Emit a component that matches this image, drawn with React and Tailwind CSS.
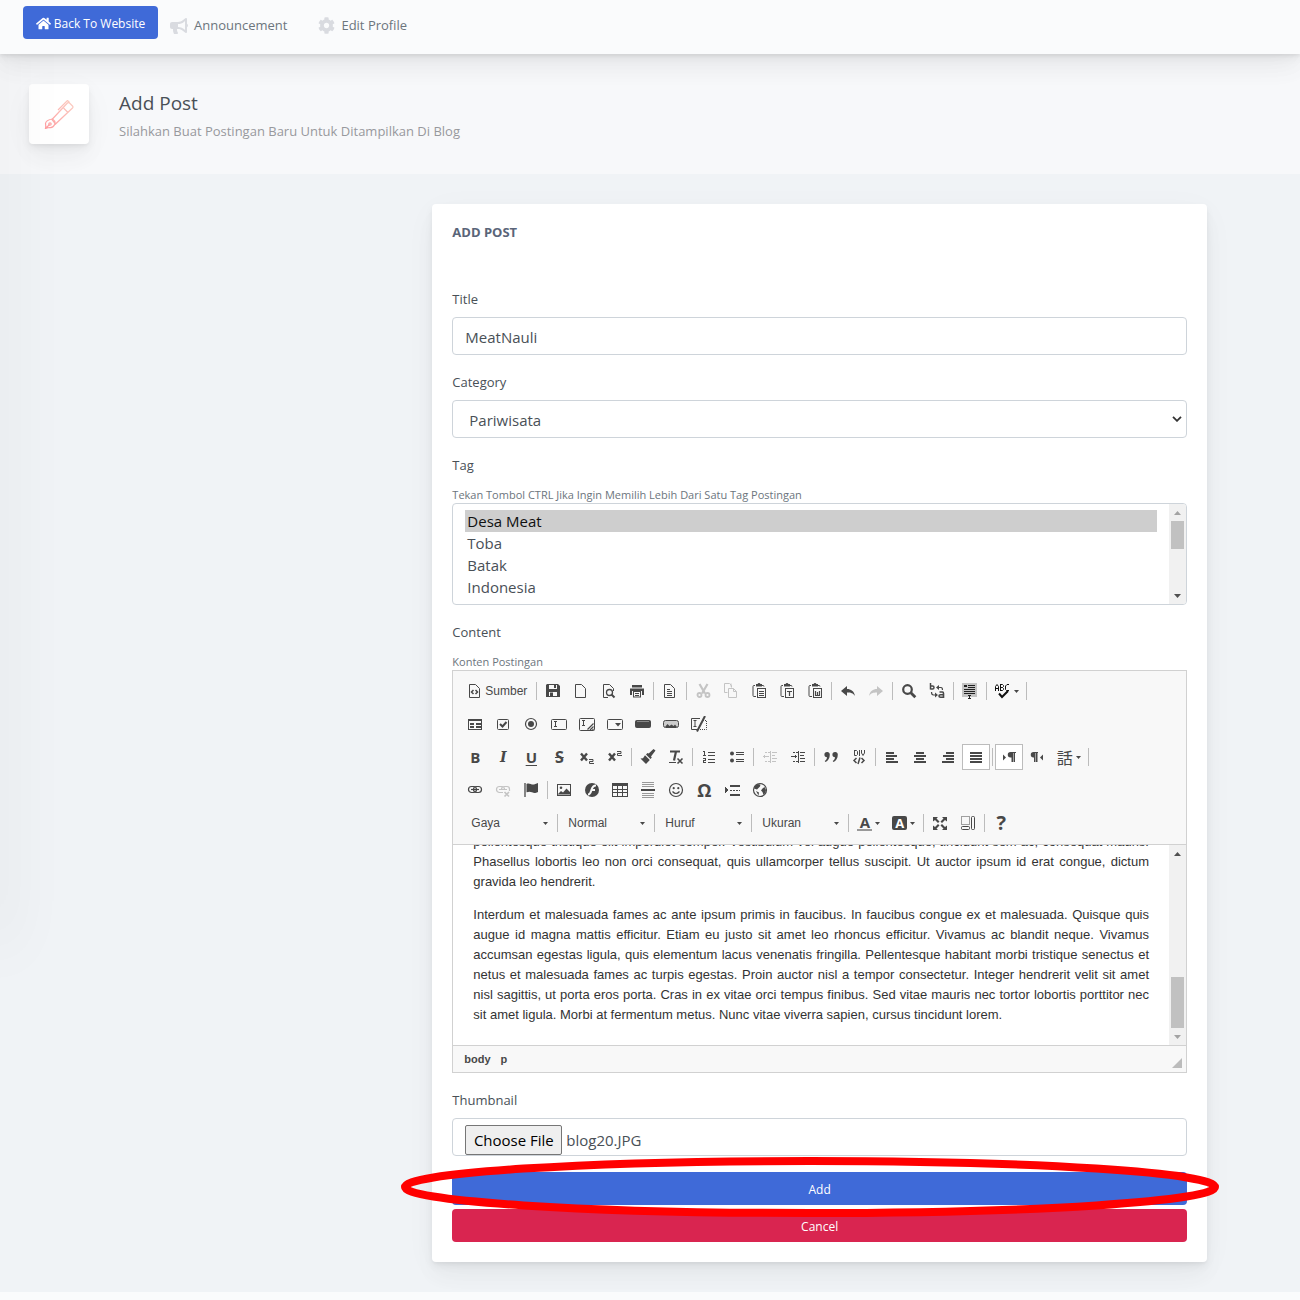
import React, { useRef } from "react";
import { FaHome, FaBullhorn, FaCog } from "react-icons/fa";

const Svg = ({ children, crisp }) => (
  <svg
    width="16"
    height="16"
    viewBox="0 0 16 16"
    fill="none"
    stroke="currentColor"
    strokeWidth="1"
    shapeRendering={crisp ? "crispEdges" : "auto"}
    aria-hidden="true"
    className="shrink-0"
  >
    {children}
  </svg>
);

const Fill = ({ d, ...rest }) => <path d={d} fill="currentColor" stroke="none" {...rest} />;

const Clipboard = ({ children }) => (
  <Svg>
    <path d="M4 2.500H3q-1 0-1 1v9q0 1 1 1h2M11 2.500h1q1 0 1 1" />
    <Fill d="M5 1h1.500l1-1h1l1 1H11v2.500H5z" />
    <rect x="6.500" y="5.500" width="8" height="9" fill="#f8f8f8" />
    {children}
  </Svg>
);

const Page = () => <path d="M3.500 1.500h6l4 4v9h-10z" />;

const icons = {
  source: (
    <Svg>
      <Page />
      <path d="M7.500 7L5.500 9l2 2M9.500 7l2 2-2 2" strokeWidth="1.500" />
    </Svg>
  ),
  save: (
    <Svg>
      <Fill d="M2 1h11l2 2v11H1V2zM4 2v4h8V2zM4 9v4h8V9z" fillRule="evenodd" />
      <Fill d="M9 2h2v3H9zM5 9.500h3V14H5z" />
    </Svg>
  ),
  newPage: (
    <Svg>
      <path d="M2.500 1.500h6l4 4v9h-10z" />
    </Svg>
  ),
  preview: (
    <Svg>
      <path d="M7 14.500H2.500v-13h6l4 4V8" />
      <circle cx="8.500" cy="9.500" r="3" strokeWidth="1.300" />
      <path d="M10.500 11.500l3 3" strokeWidth="2" />
    </Svg>
  ),
  print: (
    <Svg>
      <Fill d="M3 2h10v2.500H3zM1 5.500h14V12h-2V8H3v4H1z" />
      <rect x="4.500" y="8.500" width="7" height="5.500" />
      <path d="M6 10.500h4M6 12.500h4" />
    </Svg>
  ),
  templates: (
    <Svg>
      <path d="M2.500 1.500h6l4 4v9h-10z" />
      <path d="M5 6.500h3M5 8.500h5M5 10.500h5M5 12.500h5" />
    </Svg>
  ),
  cut: (
    <Svg>
      <path d="M4.500 1l5.500 9.500M12.500 1L7 10.500" strokeWidth="2.200" />
      <circle cx="4.500" cy="12" r="2" strokeWidth="1.800" />
      <circle cx="12.500" cy="12" r="2" strokeWidth="1.800" />
    </Svg>
  ),
  copy: (
    <Svg>
      <path d="M4.500 9.500h-3v-9h5l2 2v2M8 .5v3" />
      <path d="M5.500 5.500h5l3 3v6h-8zM10.500 5.500v3h3" />
    </Svg>
  ),
  paste: (
    <Clipboard>
      <path d="M8 8.500h5M8 10.500h5M8 12.500h5" />
    </Clipboard>
  ),
  pasteText: (
    <Clipboard>
      <path d="M8 8.500h5M10.500 8.500v4.500" strokeWidth="1.200" />
    </Clipboard>
  ),
  pasteWord: (
    <Clipboard>
      <path d="M8.500 8v4.500h4V8M10.500 9v3.500" strokeWidth="1.200" />
    </Clipboard>
  ),
  undo: (
    <Svg>
      <Fill d="M1 8l6-5v3c4 0 7 2 8 7-2-3-4-3.500-8-3.500V13z" />
    </Svg>
  ),
  redo: (
    <Svg>
      <Fill d="M15 8L9 3v3c-4 0-7 2-8 7 2-3 4-3.500 8-3.500V13z" />
    </Svg>
  ),
  find: (
    <Svg>
      <circle cx="6.500" cy="6.500" r="4.300" strokeWidth="2.200" />
      <path d="M9.800 9.800l4.500 4.500" strokeWidth="2.800" />
    </Svg>
  ),
  replace: (
    <Svg>
      <path d="M1.500 0v6.500M1.500 6h2q1.500 0 1.500-1.500T3.500 3h-2" strokeWidth="1.500" />
      <path d="M10.500 9h3q1 0 1 1.500v4.500M14.500 14.300h-3q-1.500 0-1.500-1.200t1.500-1.300h3" strokeWidth="1.600" />
      <path d="M9 4.500h3q1.500 0 1.500 2.500M2.500 9q0 3 2 3H6" strokeWidth="1.200" />
      <Fill d="M7 4.500L10 2v5zM9 12l-3-2.500v5z" />
    </Svg>
  ),
  selectAll: (
    <Svg crisp>
      <rect x="0" y="0" width="15" height="14" fill="#c4c4c4" stroke="none" />
      <path d="M2 2.500h3M2 3.500h3M6 2.500h7M6 4.500h7M2 6.500h11M2 8.500h11M2 10.500h11M6 12.500h3M7.500 13v2M6 15.500h3" stroke="#222" />
    </Svg>
  ),
  spell: (
    <Svg>
      <g stroke="#111">
        <path d="M.5 8V3.500L2 1.500l1.500 2V8M.5 5.500h3M5.500 1v7M5.500 1.500h2l1 1v1l-1 1h-2M7.500 4.500l1 1v1l-1 1h-2M14 1.500h-2l-1.500 1.500v3.500l1 1H14" />
        <path d="M4 10.500l3 3.500 6-6" strokeWidth="2" />
      </g>
    </Svg>
  ),
  form: (
    <Svg crisp>
      <rect x="1.500" y="3.500" width="13" height="10" />
      <path d="M1 4.500h14M3 7.500h4M3 8.500h4M9 7.500h5M9 8.500h5M3 10.500h4M3 11.500h4M9 10.500h5M9 11.500h5" />
    </Svg>
  ),
  checkbox: (
    <Svg>
      <rect x="2.500" y="3.500" width="11" height="10" rx="1" />
      <path d="M5 8l2.500 2.500 4-4.500" strokeWidth="2" />
    </Svg>
  ),
  radio: (
    <Svg>
      <circle cx="8" cy="8" r="5.500" strokeWidth="1.200" />
      <circle cx="8" cy="8" r="3" fill="currentColor" stroke="none" />
    </Svg>
  ),
  textField: (
    <Svg>
      <rect x=".5" y="3.500" width="15" height="10" rx="1" />
      <path d="M3 5.500h3M4.500 5.500v5M3 10.500h3" />
    </Svg>
  ),
  textarea: (
    <Svg>
      <rect x=".5" y="2.500" width="15" height="12" rx="1" />
      <path d="M3 4.500h3M4.500 4.500v5M3 9.500h3" />
      <path d="M14.500 7.500l-6 6M14.500 10.500l-3.500 3.500M14.500 13l-1 1" strokeWidth="1.200" />
    </Svg>
  ),
  selectField: (
    <Svg>
      <rect x=".5" y="3.500" width="15" height="10" rx="1" />
      <Fill d="M8 7h6l-3 3.500z" />
    </Svg>
  ),
  button: (
    <Svg>
      <rect x=".5" y="4.500" width="15" height="7" rx="1" fill="currentColor" />
      <path d="M2 5.500h12" stroke="#888" />
    </Svg>
  ),
  imageButton: (
    <Svg>
      <rect x=".5" y="4.500" width="15" height="7" rx="2" fill="#ccc" />
      <Fill d="M2 11l2.500-3 2 2 2-1.500 2 1.500L12 8.500 14 11z" />
    </Svg>
  ),
  hidden: (
    <Svg>
      <path d="M9 2.500H.5v11H6M2.500 4.500h3M4 4.500v6M2.500 10.500h3" />
      <path d="M12 4.500h3.500v9H8" strokeDasharray="1 1" />
      <path d="M14 0L6 15.500" strokeWidth="2" />
    </Svg>
  ),
  sub: (
    <Svg>
      <path d="M2 4.500l6 7M8 4.500l-6 7" strokeWidth="2.400" />
      <path d="M10 10.500h4v2h-3.500v2H15" />
    </Svg>
  ),
  sup: (
    <Svg>
      <path d="M2 4.500l6 7M8 4.500l-6 7" strokeWidth="2.400" />
      <path d="M10 2.500h4v2h-3.500v2H15" />
    </Svg>
  ),
  copyFormat: (
    <Svg>
      <Fill d="M13.500 0l2 1.500-4.500 6 .8 1-1.300 1.500L6 5.500 7.500 4l1.200.6zM5 6.300L9.800 11 6 15 .5 9.500l2.500-.3z" />
    </Svg>
  ),
  removeFormat: (
    <Svg>
      <path d="M2 2.500h10M8 2.500L6 11.500" strokeWidth="2.200" />
      <path d="M1 13.500h7" />
      <path d="M9.500 9.500l5 5M14.500 9.500l-5 5" strokeWidth="1.600" />
    </Svg>
  ),
  numbered: (
    <Svg crisp>
      <path d="M2 2.500h1.500V7M2 6.500h3M2 9.500h2.500v2h-2v2H5M7 3.500h7M7 6.500h7M7 10.500h7M7 13.500h7" />
    </Svg>
  ),
  bulleted: (
    <Svg>
      <circle cx="3" cy="4.500" r="2" fill="currentColor" stroke="none" />
      <circle cx="3" cy="11.500" r="2" fill="currentColor" stroke="none" />
      <path d="M7 3.500h8M7 5.500h8M7 10.500h8M7 12.500h8" />
    </Svg>
  ),
  outdent: (
    <Svg crisp>
      <path d="M8.500 2v12M10 3.500h5M10 6.500h3M10 9.500h5M10 12.500h4M1 7.500h6M2.500 6v3" />
      <path d="M3 3.500h5M3 12.500h5" strokeDasharray="2 1" />
    </Svg>
  ),
  indent: (
    <Svg crisp>
      <path d="M8.500 2v12M10 3.500h5M10 6.500h4M10 9.500h5M10 12.500h5M1 7.500h6M5.500 6v3" />
      <path d="M3 3.500h5M3 12.500h5" strokeDasharray="2 1" />
    </Svg>
  ),
  quote: (
    <Svg>
      <Fill d="M4 3a2.500 2.500 0 0 1 2.800 2.800C6.800 9.500 5 12 2.500 13l-.8-1C3.300 11 4 9.500 4 8.200A2.600 2.600 0 0 1 4 3zM12 3a2.500 2.500 0 0 1 2.800 2.800c0 3.700-1.800 6.200-4.300 7.200l-.8-1c1.600-1 2.300-2.500 2.300-3.800A2.600 2.600 0 0 1 12 3z" />
    </Svg>
  ),
  div: (
    <Svg>
      <path d="M3.500 1v5.500h2l1-1v-3l-1-1h-2M8.500 1v6M10.500 1v3L12 6.500 13.500 4V1" />
      <path d="M5.500 9L3 11.500 5.500 14M10.500 9l2.500 2.500-2.500 2.500M9 8.500L7 15" strokeWidth="1.500" />
    </Svg>
  ),
  left: (
    <Svg crisp>
      <Fill d="M2 3h8v2H2zM2 6h11v2H2zM2 9h8v2H2zM2 12h12v2H2z" />
    </Svg>
  ),
  center: (
    <Svg crisp>
      <Fill d="M4 3h8v2H4zM2 6h12v2H2zM4 9h8v2H4zM2 12h12v2H2z" />
    </Svg>
  ),
  right: (
    <Svg crisp>
      <Fill d="M6 3h8v2H6zM3 6h11v2H3zM6 9h8v2H6zM2 12h12v2H2z" />
    </Svg>
  ),
  justify: (
    <Svg crisp>
      <Fill d="M2 3h12v2H2zM2 6h12v2H2zM2 9h12v2H2zM2 12h12v2H2z" />
    </Svg>
  ),
  ltr: (
    <Svg>
      <Fill d="M2 5.500L5 8.500 2 11.500z" />
      <Fill d="M9.500 3H15v1h-1v9h-1.500V4H12v9h-1.500V8.500H9.500A2.700 2.700 0 0 1 9.500 3z" />
    </Svg>
  ),
  rtl: (
    <Svg>
      <Fill d="M14 5.500l-3 3 3 3z" />
      <Fill d="M4.500 3H9v1H8.500v9H7V4h-.5v9H5V8.500h-.5A2.700 2.700 0 0 1 4.500 3z" />
    </Svg>
  ),
  link: (
    <Svg>
      <rect x="1.500" y="4.500" width="8" height="6" rx="3" strokeWidth="1.200" />
      <rect x="6.500" y="4.500" width="8" height="6" rx="3" strokeWidth="1.200" />
      <path d="M4 7.500h8" strokeWidth="1.200" />
    </Svg>
  ),
  unlink: (
    <Svg>
      <path d="M8 10.500H4.500a3 3 0 0 1 0-6H7q2.500 0 2.500 3M4 7.500h8M14.500 9V7.500q0-3-2.500-3H9.500q-3 0-3 3" strokeWidth="1.200" />
      <path d="M9.500 10l4.500 4.500M14 10l-4.500 4.500" strokeWidth="1.700" />
    </Svg>
  ),
  anchor: (
    <Svg>
      <path d="M2 1v14" strokeWidth="1.300" />
      <Fill d="M3.500 2c3-1.500 4.500 1 7.500.5L15 1v9c-3 1.500-4 1.200-6 .3-2-.8-3-.8-5.500 0z" />
    </Svg>
  ),
  image: (
    <Svg>
      <rect x="1.500" y="2.500" width="13" height="11" />
      <circle cx="5" cy="5.700" r="1.300" fill="currentColor" stroke="none" />
      <Fill d="M2 12l3-3 2 1.500 3.500-4L14 10v2.500H2z" />
    </Svg>
  ),
  flash: (
    <Svg>
      <circle cx="8" cy="8" r="7" fill="currentColor" stroke="none" />
      <path d="M12 3.500C8.500 3.500 8 6 7.300 8.500S5.500 12.500 4 12.500M7.500 8H11" stroke="#f8f8f8" strokeWidth="2" />
    </Svg>
  ),
  table: (
    <Svg crisp>
      <Fill d="M0 1h16v3H0z" />
      <path d="M.5 3v11.500h15V3M0 7.500h16M0 10.500h16M5.500 4v10M10.500 4v10" />
    </Svg>
  ),
  hr: (
    <Svg crisp>
      <path d="M2 .5h12M2 2.500h12M2 4.500h12M2 11.500h12M2 13.500h12M2 15.500h12" stroke="#999" />
      <Fill d="M1 7h14v2H1z" />
    </Svg>
  ),
  smiley: (
    <Svg>
      <circle cx="8" cy="8" r="6.500" strokeWidth="1.200" />
      <circle cx="5.700" cy="6.200" r="1.100" fill="currentColor" stroke="none" />
      <circle cx="10.300" cy="6.200" r="1.100" fill="currentColor" stroke="none" />
      <path d="M4.500 9.500q3.500 4 7 0" strokeWidth="1.200" />
    </Svg>
  ),
  pageBreak: (
    <Svg crisp>
      <Fill d="M1 5l4 3-4 3zM6 3h10v2H6zM6 12h10v2H6z" />
      <path d="M6 8.500h10" strokeDasharray="2 1" />
    </Svg>
  ),
  iframe: (
    <Svg>
      <circle cx="8" cy="8" r="6.500" strokeWidth="1.200" />
      <Fill d="M2.500 4.500L5.500 2l3 .5-.5 2L6.500 6 5 7.500 2 6.500zM10.500 6.500l2-1.500 1.500 3-.5 2.500-2 2.500-1-3L9 8.500zM4 9l3 1.500-.5 3z" />
    </Svg>
  ),
  maximize: (
    <Svg>
      <Fill d="M1 2h5L4.500 3.500l3 3L6 8 3 5 1 6.500zM15 2h-5l1.500 1.500-3 3L10 8l3-3 2 1.500zM1 15h5l-1.500-1.500 3-3L6 9l-3 3-2-1.500zM15 15h-5l1.500-1.500-3-3L10 9l3 3 2-1.500z" />
    </Svg>
  ),
  blocks: (
    <Svg>
      <path d="M1.500 1.500h8v8h-8z" strokeDasharray="1 1" />
      <rect x="1.500" y="11.500" width="8" height="3" rx="1" />
      <rect x="11.500" y="1.500" width="3" height="13" rx="1" />
    </Svg>
  ),
};

const Caret = () => (
  <svg width="5" height="3" viewBox="0 0 5 3" aria-hidden="true" className="shrink-0 text-[#484848]">
    <path d="M0 0h5L2.500 3z" fill="currentColor" />
  </svg>
);

function Tool({ name, label, arrow, off, on, children }) {
  return (
    <button
      type="button"
      aria-label={label}
      disabled={off}
      className={`flex h-[26px] items-center justify-center gap-[3px] ${arrow ? "w-[35px]" : "w-7"} ${
        on ? "border border-[#bcbcbc] bg-white" : ""
      } ${off ? "text-[#c4c4c4]" : "text-[#484848]"}`}
    >
      {children || icons[name]}
      {arrow && <Caret />}
    </button>
  );
}

const Sep = () => <span className="mx-[2px] h-[18px] w-px shrink-0 bg-[#bcbcbc]" />;
const Row = ({ children }) => <div className="flex items-center">{children}</div>;
const Glyph = ({ children, className = "text-[15px]" }) => (
  <span className={`font-['Open_Sans',sans-serif] leading-4 font-bold ${className}`}>{children}</span>
);

function Combo({ text }) {
  return (
    <button
      type="button"
      aria-haspopup="listbox"
      className="flex h-[26px] w-[92px] items-center justify-between pr-[7px] pl-2 text-xs text-[#484848]"
    >
      {text}
      <Caret />
    </button>
  );
}

function Toolbar() {
  return (
    <div role="toolbar" aria-label="Editor" className="flex flex-col gap-[7px] border-b border-[#d1d1d1] bg-[#f8f8f8] px-2 pt-[7px] pb-2">
      <Row>
        <button type="button" className="flex h-[26px] w-[73px] items-center gap-[3px] pl-[5px] text-xs text-[#484848]">
          {icons.source}
          Sumber
        </button>
        <Sep />
        <Tool name="save" label="Simpan" />
        <Tool name="newPage" label="Halaman Baru" />
        <Tool name="preview" label="Pratinjau" />
        <Tool name="print" label="Cetak" />
        <Sep />
        <Tool name="templates" label="Contoh" />
        <Sep />
        <Tool name="cut" label="Potong" off />
        <Tool name="copy" label="Salin" off />
        <Tool name="paste" label="Tempel" />
        <Tool name="pasteText" label="Tempel sebagai teks polos" />
        <Tool name="pasteWord" label="Tempel dari Word" />
        <Sep />
        <Tool name="undo" label="Batal perbuatan" />
        <Tool name="redo" label="Kembali lakukan" off />
        <Sep />
        <Tool name="find" label="Temukan" />
        <Tool name="replace" label="Ganti" />
        <Sep />
        <Tool name="selectAll" label="Pilih semua" />
        <Sep />
        <Tool name="spell" label="Periksa ejaan" arrow />
        <Sep />
      </Row>
      <Row>
        <Tool name="form" label="Form" />
        <Tool name="checkbox" label="Kotak cek" />
        <Tool name="radio" label="Tombol radio" />
        <Tool name="textField" label="Kolom teks" />
        <Tool name="textarea" label="Area teks" />
        <Tool name="selectField" label="Kolom seleksi" />
        <Tool name="button" label="Tombol" />
        <Tool name="imageButton" label="Tombol gambar" />
        <Tool name="hidden" label="Kolom tersembunyi" />
      </Row>
      <Row>
        <Tool label="Tebal">
          <Glyph>B</Glyph>
        </Tool>
        <Tool label="Miring">
          <span className="font-['DejaVu_Serif',serif] text-sm leading-4 font-bold italic">I</span>
        </Tool>
        <Tool label="Garis bawah">
          <Glyph className="text-[15px] underline underline-offset-2">U</Glyph>
        </Tool>
        <Tool label="Coret">
          <Glyph className="text-base line-through">S</Glyph>
        </Tool>
        <Tool name="sub" label="Subskrip" />
        <Tool name="sup" label="Superskrip" />
        <Sep />
        <Tool name="copyFormat" label="Salin format" />
        <Tool name="removeFormat" label="Hapus format" />
        <Sep />
        <Tool name="numbered" label="Daftar bernomor" />
        <Tool name="bulleted" label="Daftar bulatan" />
        <Sep />
        <Tool name="outdent" label="Kurangi lekuk" off />
        <Tool name="indent" label="Tambah lekuk" />
        <Sep />
        <Tool name="quote" label="Kutipan" />
        <Tool name="div" label="Wadah div" />
        <Sep />
        <Tool name="left" label="Rata kiri" />
        <Tool name="center" label="Rata tengah" />
        <Tool name="right" label="Rata kanan" />
        <Tool name="justify" label="Rata kiri-kanan" on />
        <Sep />
        <Tool name="ltr" label="Kiri ke kanan" on />
        <Tool name="rtl" label="Kanan ke kiri" />
        <Tool label="Bahasa" arrow>
          <span className="font-['Noto_Sans_CJK_JP',sans-serif] text-base leading-[14px]">話</span>
        </Tool>
        <Sep />
      </Row>
      <Row>
        <Tool name="link" label="Tautan" />
        <Tool name="unlink" label="Hapus tautan" off />
        <Tool name="anchor" label="Jangkar" />
        <Sep />
        <Tool name="image" label="Gambar" />
        <Tool name="flash" label="Flash" />
        <Tool name="table" label="Tabel" />
        <Tool name="hr" label="Garis horisontal" />
        <Tool name="smiley" label="Senyuman" />
        <Tool label="Karakter spesial">
          <Glyph className="text-lg">Ω</Glyph>
        </Tool>
        <Tool name="pageBreak" label="Pemisah halaman" />
        <Tool name="iframe" label="IFrame" />
      </Row>
      <div className="flex items-center pl-[2px]">
        <Combo text="Gaya" />
        <Sep />
        <Combo text="Normal" />
        <Sep />
        <Combo text="Huruf" />
        <Sep />
        <Combo text="Ukuran" />
        <Sep />
        <Tool label="Warna teks" arrow>
          <span className="h-4 w-[15px] border-b-2 border-[#999] text-center font-['Open_Sans',sans-serif] text-[15px] leading-[14px] font-bold">
            A
          </span>
        </Tool>
        <Tool label="Warna latar" arrow>
          <span className="h-[14px] w-[15px] rounded-xs bg-[#484848] text-center font-['Open_Sans',sans-serif] text-[13px] leading-[14px] font-bold text-white">
            A
          </span>
        </Tool>
        <Sep />
        <Tool name="maximize" label="Memperbesar" />
        <Tool name="blocks" label="Perlihatkan blok" />
        <Sep />
        <Tool label="Tentang CKEditor">
          <Glyph className="text-xl">?</Glyph>
        </Tool>
      </div>
    </div>
  );
}

const Tri = ({ up, dim }) => (
  <svg width="7" height="4" viewBox="0 0 7 4" aria-hidden="true" className={dim ? "text-[#a3a3a3]" : "text-[#505050]"}>
    <path d={up ? "M0 4h7L3.500 0z" : "M0 0h7L3.500 4z"} fill="currentColor" />
  </svg>
);

function ScrollBar({ dimUp, dimDown, children }) {
  return (
    <div aria-hidden="true" className="flex w-[17px] shrink-0 flex-col items-center bg-[#f1f1f1]">
      <span className="flex h-[17px] items-center">
        <Tri up dim={dimUp} />
      </span>
      <span className="flex w-full flex-1 flex-col items-center">{children}</span>
      <span className="flex h-[17px] items-center">
        <Tri dim={dimDown} />
      </span>
    </div>
  );
}

const Label = ({ children, ...rest }) => (
  <label className="mb-[6px] block text-[13px] leading-[23px]" {...rest}>
    {children}
  </label>
);
const Hint = ({ children }) => <small className="block pt-1 text-[11px] leading-4 text-[#6c757d]">{children}</small>;
const box = "rounded border border-[#ced4da] bg-white";

export default function App() {
  const file = useRef(null);
  return (
    <div className="relative min-h-screen overflow-hidden bg-[#f0f3f6] font-['Open_Sans','Noto_Sans',sans-serif] text-[#495057]">
      <div aria-hidden="true" className="pointer-events-none absolute top-0 -left-5 h-[950px] w-5 shadow-[7px_0_60px_rgba(0,0,0,0.08)]" />

      <header className="relative z-10 flex h-[54px] bg-[#fafbfc] pl-[23px] shadow-[0_7px_35px_rgba(4,9,20,0.05),0_15px_22px_rgba(4,9,20,0.03),0_4px_8px_rgba(4,9,20,0.05),0_2px_3px_rgba(4,9,20,0.05)]">
        <a
          href="#website"
          className="mt-[6px] flex h-[33px] w-[135px] items-center justify-center gap-[3px] rounded bg-[#3f6ad8] pt-[2px] text-xs font-medium text-white"
        >
          <FaHome size={15} />
          Back To Website
        </a>
        <nav className="flex h-[51px] items-center text-[13px] text-[#6c757d]">
          <a href="#announcement" className="ml-3 flex items-center gap-[6px]">
            <FaBullhorn size={18} color="#d9dbe0" />
            Announcement
          </a>
          <a href="#profile" className="ml-[31px] flex items-center gap-[6px]">
            <FaCog size={17} color="#d9dbe0" />
            Edit Profile
          </a>
        </nav>
      </header>

      <div className="flex h-[120px] items-center bg-white/45 pl-[29px]">
        <div className="flex size-[60px] items-center justify-center rounded bg-white shadow-[0_7px_35px_rgba(4,9,20,0.03),0_15px_22px_rgba(4,9,20,0.03),0_4px_8px_rgba(4,9,20,0.05),0_2px_3px_rgba(4,9,20,0.03)]">
          <svg width="30" height="30" viewBox="0 0 30 30" fill="none" stroke="url(#pen)" strokeWidth="1.200" aria-hidden="true">
            <defs>
              <linearGradient id="pen" x1="0" y1="30" x2="30" y2="0" gradientUnits="userSpaceOnUse">
                <stop offset="0" stopColor="#ff9a9e" />
                <stop offset="1" stopColor="#fad0c4" />
              </linearGradient>
            </defs>
            <path d="M8 20.500L22 5.500l1.500-1.500q1-1 2 0l3 3q1 1 0 2L11.500 25z" />
            <path d="M19.500 9l4.500 4.500M23.500 1.500L14 11M23.500 1.500l2 2" />
            <path d="M8.500 20q3 2 2.500 5-2 4-5 3.500-2 0-4.500 1 .5-2 0-5 .5-3.500 7-4.500zM1.500 29.500l4-4" />
            <circle cx="6" cy="25" r="1.200" />
          </svg>
        </div>
        <div className="mt-1 ml-[30px]">
          <h1 className="text-[19px] leading-6">Add Post</h1>
          <p className="mt-[6px] text-[13px] leading-5 text-[#97999d]">Silahkan Buat Postingan Baru Untuk Ditampilkan Di Blog</p>
        </div>
      </div>

      <main className="grid grid-cols-12 gap-[30px] pt-[30px] pr-[93px] pb-[30px] pl-[30px]">
        <form
          onSubmit={(e) => e.preventDefault()}
          className="col-span-8 col-start-5 rounded bg-white p-5 shadow-[0_7px_35px_rgba(4,9,20,0.03),0_15px_22px_rgba(4,9,20,0.03),0_4px_8px_rgba(4,9,20,0.05),0_2px_3px_rgba(4,9,20,0.03)]"
        >
          <h2 className="mb-12 text-[13px] leading-4 font-bold text-[#5a6579]">ADD POST</h2>

          <Label htmlFor="title">Title</Label>
          <input id="title" defaultValue="MeatNauli" className={`mb-4 block h-[38px] w-full px-3 pt-[2px] text-[15px] ${box}`} />

          <Label htmlFor="category">Category</Label>
          <div className="relative mb-4">
            <select id="category" className={`block h-[38px] w-full appearance-none px-4 pt-[2px] text-[15px] ${box}`}>
              <option>Pariwisata</option>
            </select>
            <svg width="10" height="6" viewBox="0 0 10 6" aria-hidden="true" className="pointer-events-none absolute top-4 right-[5px]">
              <path d="M1 .8l4 4 4-4" fill="none" stroke="#333" strokeWidth="1.800" />
            </svg>
          </div>

          <Label htmlFor="tag">Tag</Label>
          <Hint>Tekan Tombol CTRL Jika Ingin Memilih Lebih Dari Satu Tag Postingan</Hint>
          <div className={`mb-4 flex h-[102px] overflow-hidden ${box}`}>
            <select
              id="tag"
              multiple
              defaultValue={["Desa Meat"]}
              className="min-w-0 flex-1 overflow-hidden px-3 pt-[6px] text-[15px] outline-none [scrollbar-width:none]"
            >
              {["Desa Meat", "Toba", "Batak", "Indonesia", "Sumatera"].map((t) => (
                <option key={t} className="h-[22px] px-[2px] pt-px leading-[22px]">
                  {t}
                </option>
              ))}
            </select>
            <ScrollBar dimUp>
              <span className="h-7 w-[13px] bg-[#c1c1c1]" />
            </ScrollBar>
          </div>

          <Label id="content-label">Content</Label>
          <Hint>Konten Postingan</Hint>
          <div className="mb-4 border border-[#d1d1d1] font-['Liberation_Sans',sans-serif]">
            <Toolbar />
            <div className="flex h-[200px]">
              <div
                role="textbox"
                aria-labelledby="content-label"
                aria-multiline="true"
                tabIndex={0}
                className="flex min-w-0 flex-1 flex-col justify-end gap-[13px] overflow-hidden px-5 pb-5 text-justify text-[13px] leading-5 text-[#333]"
              >
                <p>
                  pellentesque tristique elit imperdiet semper. Vestibulum vel augue pellentesque, tincidunt sem ac, consequat mauris.
                  Phasellus lobortis leo non orci consequat, quis ullamcorper tellus suscipit. Ut auctor ipsum id erat congue, dictum
                  gravida leo hendrerit.
                </p>
                <p>
                  Interdum et malesuada fames ac ante ipsum primis in faucibus. In faucibus congue ex et malesuada. Quisque quis augue id
                  magna mattis efficitur. Etiam eu justo sit amet leo rhoncus efficitur. Vivamus ac blandit neque. Vivamus accumsan
                  egestas ligula, quis elementum lacus venenatis fringilla. Pellentesque habitant morbi tristique senectus et netus et
                  malesuada fames ac turpis egestas. Proin auctor nisl a tempor consectetur. Integer hendrerit velit sit amet nisl
                  sagittis, ut porta eros porta. Cras in ex vitae orci tempus finibus. Sed vitae mauris nec tortor lobortis porttitor nec
                  sit amet ligula. Morbi at fermentum metus. Nunc vitae viverra sapien, cursus tincidunt lorem.
                </p>
              </div>
              <ScrollBar dimDown>
                <span className="mt-auto h-[51px] w-[13px] bg-[#c1c1c1]" />
              </ScrollBar>
            </div>
            <div className="flex h-[27px] items-center border-t border-[#d1d1d1] bg-[#f8f8f8] pr-1 pl-[11px] text-[11px] font-bold text-[#484848]">
              <span>body</span>
              <span className="ml-[10px]">p</span>
              <svg width="10" height="10" viewBox="0 0 10 10" aria-hidden="true" className="mt-2 ml-auto">
                <path d="M10 0v10H0z" fill="#bcbcbc" />
              </svg>
            </div>
          </div>

          <Label htmlFor="thumbnail">Thumbnail</Label>
          <div className={`mb-4 flex h-[38px] items-end px-3 text-[15px] ${box}`}>
            <input id="thumbnail" type="file" ref={file} className="sr-only" />
            <button
              type="button"
              onClick={() => file.current.click()}
              className="h-[30px] w-[97px] rounded-xs border border-[#767676] bg-[#efefef] text-center text-black"
            >
              Choose File
            </button>
            <span className="ml-1 leading-[30px]">blog20.JPG</span>
          </div>

          <div className="relative mb-1">
            <button type="submit" className="block h-[33px] w-full rounded bg-[#3f6ad8] pt-[2px] text-xs font-medium text-white">
              Add
            </button>
            <svg
              viewBox="0 0 818 60"
              preserveAspectRatio="none"
              aria-hidden="true"
              className="pointer-events-none absolute -top-[15px] -left-[51px] z-10 h-[60px] w-[818px] max-w-none"
            >
              <ellipse cx="409" cy="30" rx="405" ry="26" fill="none" stroke="#ff0000" strokeWidth="8" />
            </svg>
          </div>
          <button type="button" className="block h-[33px] w-full rounded bg-[#d92550] pt-[2px] text-xs font-medium text-white">
            Cancel
          </button>
        </form>
      </main>
      <footer className="relative h-2 bg-[#fafbfc]" />
    </div>
  );
}
